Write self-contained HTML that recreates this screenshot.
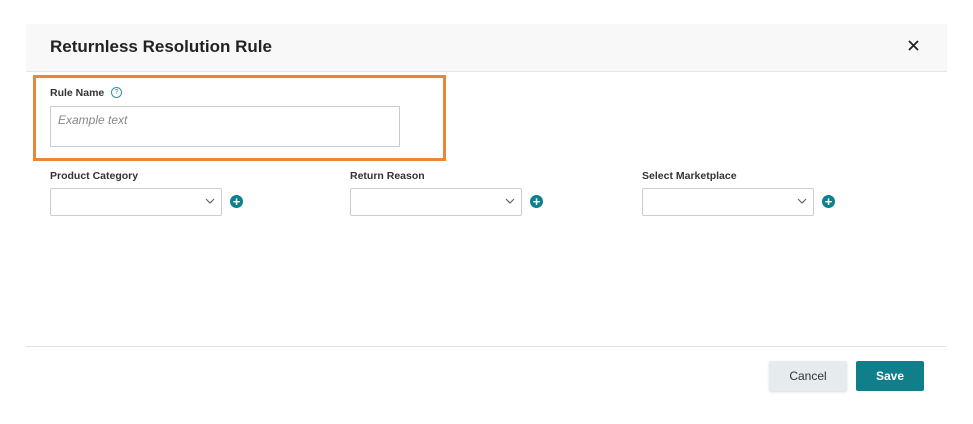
<!DOCTYPE html>
<html><head><style>
body{margin:0;width:973px;height:424px;background:#fff;font-family:"Liberation Sans",Arial,sans-serif;position:relative;overflow:hidden}
.a{position:absolute}
.hdr{left:26px;top:24px;width:921px;height:47px;background:#f8f8f8;border-bottom:1px solid #e6e6e6}
.lbl{font-size:10.5px;font-weight:bold;color:#333}
.sel{height:26px;width:170px;border:1px solid #ccc;border-radius:2px;background:#fff}
.plus{width:13px;height:13px;border-radius:50%;background:#0f7f8c;color:#fff;font-size:13px;font-weight:bold;line-height:13px;text-align:center}
</style></head><body>
<div class="a hdr"></div>
<div class="a" style="left:50px;top:37px;font-size:17px;font-weight:bold;color:#222">Returnless Resolution Rule</div>
<svg class="a" style="left:908px;top:40px" width="11" height="11"><path d="M1 1l9 9M10 1l-9 9" stroke="#222" stroke-width="1.8"/></svg>
<div class="a" style="left:33px;top:75px;width:407px;height:80px;border:3px solid #e8873a"></div>
<div class="a lbl" style="left:50px;top:87px">Rule Name</div>
<div class="a" style="left:111px;top:87px;width:9px;height:9px;border:1px solid #3a8f9a;border-radius:50%;font-size:7px;color:#3a8f9a;text-align:center;line-height:9px">?</div>
<div class="a" style="left:50px;top:106px;width:348px;height:39px;border:1px solid #ccc"></div>
<div class="a" style="left:58px;top:113px;font-size:12px;font-style:italic;color:#888">Example text</div>
<div class="a lbl" style="left:50px;top:170px">Product Category</div>
<div class="a lbl" style="left:350px;top:170px">Return Reason</div>
<div class="a lbl" style="left:642px;top:170px">Select Marketplace</div>
<div class="a sel" style="left:50px;top:188px"></div>
<div class="a sel" style="left:350px;top:188px"></div>
<div class="a sel" style="left:642px;top:188px"></div>
<svg class="a" style="left:205px;top:198px" width="10" height="7"><path d="M1 1l4 4 4-4" fill="none" stroke="#666" stroke-width="1.2"/></svg>
<svg class="a" style="left:505px;top:198px" width="10" height="7"><path d="M1 1l4 4 4-4" fill="none" stroke="#666" stroke-width="1.2"/></svg>
<svg class="a" style="left:797px;top:198px" width="10" height="7"><path d="M1 1l4 4 4-4" fill="none" stroke="#666" stroke-width="1.2"/></svg>
<div class="a plus" style="left:230px;top:195px">+</div>
<div class="a plus" style="left:530px;top:195px">+</div>
<div class="a plus" style="left:822px;top:195px">+</div>
<div class="a" style="left:26px;top:346px;width:921px;height:1px;background:#e3e3e3"></div>
<div class="a" style="left:769px;top:361px;width:78px;height:30px;background:#e6ecee;border-radius:2px;box-shadow:0 1px 2px rgba(0,0,0,.15);font-size:12px;color:#333;text-align:center;line-height:30px">Cancel</div>
<div class="a" style="left:856px;top:361px;width:68px;height:30px;background:#0f7f8c;border-radius:2px;font-size:12px;font-weight:bold;color:#fff;text-align:center;line-height:30px">Save</div>
</body></html>
